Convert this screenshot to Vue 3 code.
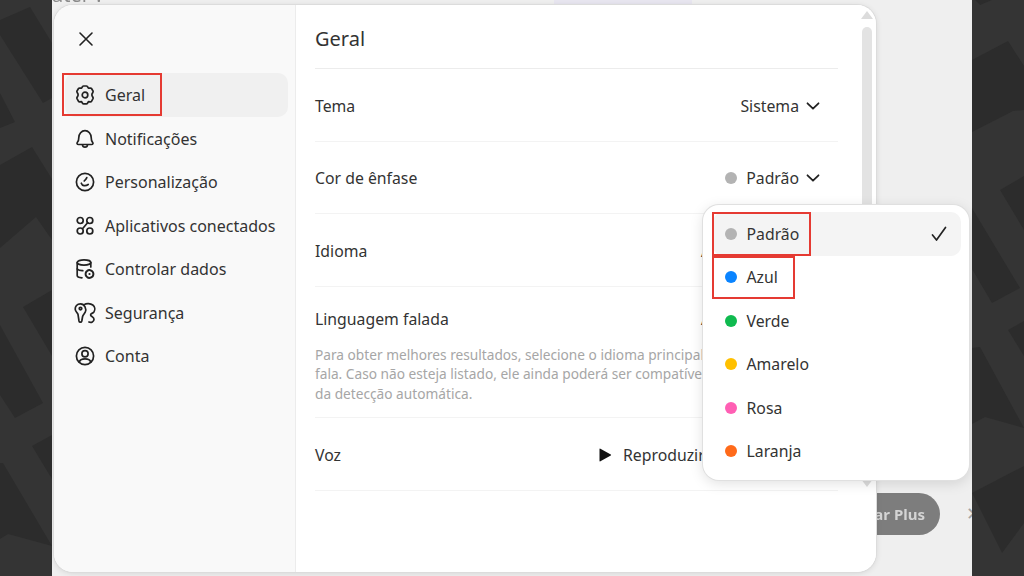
<script setup>
const nav = [
  { label: 'Geral', icon: 'gear', active: true },
  { label: 'Notificações', icon: 'bell' },
  { label: 'Personalização', icon: 'clock' },
  { label: 'Aplicativos conectados', icon: 'apps' },
  { label: 'Controlar dados', icon: 'data' },
  { label: 'Segurança', icon: 'key' },
  { label: 'Conta', icon: 'user' },
]
const colors = [
  { label: 'Padrão', color: '#b3b3b3', selected: true },
  { label: 'Azul', color: '#0a84ff' },
  { label: 'Verde', color: '#0fba4f' },
  { label: 'Amarelo', color: '#ffc000' },
  { label: 'Rosa', color: '#ff5fb4' },
  { label: 'Laranja', color: '#ff6a1a' },
]
</script>

<template>
  <div class="page">
    <svg class="strip" width="52" height="576" viewBox="0 0 52 576">
      <rect width="52" height="576" fill="#343434" />
      <g fill="#2c2c2c">
        <path d="M0 20 L30 7 L52 43 V98 L43 103 L0 35Z" />
        <path d="M0 93 L15 122 L0 128Z" />
        <path d="M0 165 L32 147 L52 179 V240 L36 217 L0 248Z" />
        <path d="M23 307 L52 290 V356Z" />
        <path d="M0 325 L43 403 L15 418 L0 395Z" />
        <path d="M32 446 L52 435 V479Z" />
        <path d="M0 463 H3 L52 546 L8 534 L0 539Z" />
      </g>
    </svg>

    <div class="center">
      <div class="behind-title">ater ?</div>
      <div class="behind-top"></div>
      <div class="upgrade">ar Plus</div>
      <div class="behind-x">✕</div>

      <section class="modal">
        <aside class="sidebar">
          <button class="close" aria-label="Fechar">
            <svg width="24" height="24" viewBox="0 0 24 24" fill="none" stroke="#222" stroke-width="1.6" stroke-linecap="round">
              <path d="M6 6 L18 18 M18 6 L6 18" />
            </svg>
          </button>
          <nav class="nav">
            <div v-for="n in nav" :key="n.label" class="nav-item" :class="{ active: n.active }">
              <svg class="nav-icon" width="22" height="22" viewBox="0 0 22 22" fill="none" stroke="#222" stroke-width="1.7" stroke-linecap="round" stroke-linejoin="round">
                <template v-if="n.icon === 'gear'">
                  <path d="M8.600 2.500 Q9 2 9.600 2 H12.400 Q13 2 13.400 2.500 L14.400 4.100 L16.500 4 Q17.200 4 17.500 4.500 L19 7 Q19.300 7.600 19 8.100 L18 10 Q17.800 10.800 18 11.600 L19 13.500 Q19.300 14.100 19 14.700 L17.500 17.300 Q17.200 17.800 16.500 17.800 L14.400 17.700 L13.400 19.400 Q13 19.900 12.400 19.900 H9.600 Q9 19.900 8.600 19.400 L7.600 17.700 L5.500 17.800 Q4.800 17.800 4.500 17.300 L3 14.700 Q2.700 14.100 3 13.500 L4 11.600 Q4.200 10.800 4 10 L3 8.100 Q2.700 7.600 3 7 L4.500 4.500 Q4.800 4 5.500 4 L7.600 4.100Z" />
                  <circle cx="11" cy="11" r="2.800" />
                </template>
                <template v-else-if="n.icon === 'bell'">
                  <path d="M4.500 16.500 C3 16.500 2.600 15.200 3.400 14.300 C4.600 13 4.800 11.500 4.800 9.500 C4.800 6 7.500 2.600 11 2.600 C14.500 2.600 17.200 6 17.200 9.500 C17.200 11.500 17.400 13 18.600 14.300 C19.400 15.200 19 16.500 17.500 16.500Z" />
                  <path d="M8.500 16.800 C8.700 20 13.300 20 13.500 16.800" />
                </template>
                <template v-else-if="n.icon === 'clock'">
                  <circle cx="11" cy="11" r="8.600" />
                  <path d="M12.800 6.600 C12.200 8 11.200 9 10.200 10" />
                  <path d="M7.300 12.200 C8.200 15 11.500 15.400 14.200 13.500" />
                </template>
                <template v-else-if="n.icon === 'apps'">
                  <circle cx="6.200" cy="5.500" r="3" />
                  <circle cx="15.800" cy="5.500" r="3" />
                  <circle cx="6.200" cy="16" r="3" />
                  <circle cx="15.800" cy="16" r="3" />
                  <path d="M8.500 13.800 L13.600 7.800" />
                </template>
                <template v-else-if="n.icon === 'data'">
                  <ellipse cx="10" cy="4.500" rx="6.800" ry="2.600" />
                  <path d="M3.200 4.500 V17.500 C3.200 18.800 5.500 19.700 8 19.800" />
                  <path d="M16.800 4.500 V9" />
                  <path d="M3.200 11 C4.500 12.300 6.500 12.800 8.800 12.700" />
                  <circle cx="15.500" cy="16" r="3.900" stroke-dasharray="2.200 .9" stroke-width="2" />
                  <circle cx="15.500" cy="16" r="1.100" fill="#222" stroke="none" />
                </template>
                <template v-else-if="n.icon === 'key'">
                  <path d="M6.500 1.800 C3 1.800 1 4.500 1.200 7.300 C1.400 9.500 3.200 10.600 4 12.300 L5 19 C5.300 20.600 7.400 20.600 7.800 19 L8.600 14.500 C8.900 12.900 10.500 11.500 11.200 10.200 C12.800 7 10.700 1.800 6.500 1.800Z" />
                  <circle cx="6.500" cy="6.600" r="1.300" />
                  <path d="M10.200 2.600 C12.500 1 16.500 1.300 18.800 3 C21.200 4.900 21.200 8 19.900 10 C18.600 11.800 16.600 11 16.600 12.900 C16.600 14.500 20 14.500 20 17.300 C20 19.800 17.200 21 15 20" />
                </template>
                <template v-else>
                  <circle cx="11" cy="11" r="8.600" />
                  <circle cx="11" cy="8.700" r="3.100" />
                  <path d="M5.300 17 C6 14.600 8.300 13.900 11 13.900 C13.700 13.900 16 14.600 16.700 17" />
                </template>
              </svg>
              <span>{{ n.label }}</span>
            </div>
          </nav>
          <div class="callout nav-callout"></div>
        </aside>

        <main class="main">
          <div class="content">
            <h1 class="title">Geral</h1>
            <div class="row">
              <span>Tema</span>
              <span class="value">Sistema
                <svg class="chev" width="16" height="16" viewBox="0 0 16 16" fill="none" stroke="#222" stroke-width="1.800" stroke-linecap="round" stroke-linejoin="round"><path d="M2.500 5.300 L8 10.700 L13.500 5.300" /></svg>
              </span>
            </div>
            <div class="row">
              <span>Cor de ênfase</span>
              <span class="value"><i class="dot grey"></i>Padrão
                <svg class="chev" width="16" height="16" viewBox="0 0 16 16" fill="none" stroke="#222" stroke-width="1.800" stroke-linecap="round" stroke-linejoin="round"><path d="M2.500 5.300 L8 10.700 L13.500 5.300" /></svg>
              </span>
            </div>
            <div class="row">
              <span>Idioma</span>
              <span class="hidden-value">Automático</span>
            </div>
            <div class="row tall">
              <span class="tall-label">Linguagem falada</span>
              <span class="hidden-value tall-value">Automático</span>
              <p class="hint">Para obter melhores resultados, selecione o idioma principal<br />fala. Caso não esteja listado, ele ainda poderá ser compatível<br />da detecção automática.</p>
            </div>
            <div class="row voice">
              <span>Voz</span>
              <span class="play">
                <svg width="14" height="14" viewBox="0 0 14 14"><path d="M1.500 1.200 Q1.500 .2 2.400 .7 L12.800 6.400 Q13.500 7 12.800 7.600 L2.400 13.300 Q1.500 13.800 1.500 12.800Z" fill="#111" /></svg>
                Reproduzir
              </span>
            </div>
          </div>
          <div class="scroll">
            <i class="arrow up"></i>
            <i class="thumb"></i>
            <i class="arrow down"></i>
          </div>
        </main>

        <div class="menu">
          <div v-for="c in colors" :key="c.label" class="menu-item" :class="{ sel: c.selected }">
            <i class="dot" :style="{ background: c.color }"></i>
            <span>{{ c.label }}</span>
            <svg v-if="c.selected" class="check" width="18" height="18" viewBox="0 0 18 18" fill="none" stroke="#222" stroke-width="1.700" stroke-linecap="round" stroke-linejoin="round"><path d="M2.500 10 L6.500 15 L15.500 2.500" /></svg>
          </div>
          <div class="callout c-pad"></div>
          <div class="callout c-azul"></div>
        </div>
      </section>
    </div>

    <svg class="strip" width="52" height="576" viewBox="0 0 52 576">
      <rect width="52" height="576" fill="#343434" />
      <g fill="#2c2c2c">
        <path d="M3 0 H20 L8 5Z" />
        <path d="M0 60 L36 41 L52 66 V110 L41 111 L0 132Z" />
        <path d="M28 190 L52 176 V230Z" />
        <path d="M0 208 L48 288 L20 303 L0 269Z" />
        <path d="M36 330 L52 321 V356Z" />
        <path d="M0 348 L8 347 L52 428 L13 417 L0 424Z" />
        <path d="M0 493 L52 466 V523 L30 553Z" />
      </g>
    </svg>
  </div>
</template>

<style>
html, body { margin: 0; padding: 0; overflow: hidden; }
</style>

<style scoped>
.page {
  width: 1024px;
  height: 576px;
  display: flex;
  overflow: hidden;
  font-family: "Noto Sans", "Open Sans", sans-serif;
  font-size: 15.800px;
  color: #2a2a2a;
}
.strip { flex: none; display: block; position: relative; z-index: 2; }
.center {
  flex: 1;
  position: relative;
  background: #efefef;
  padding: 5px 0 0 2px;
}
.behind-title {
  position: absolute;
  left: 0;
  top: -14px;
  color: #8c8c8c;
  font-size: 20px;
  line-height: 18px;
  filter: blur(.5px);
}
.behind-top {
  position: absolute;
  left: 502px;
  top: 0;
  width: 138px;
  height: 5px;
  background: #e8e6f0;
}
.upgrade {
  position: absolute;
  left: 760px;
  top: 493px;
  width: 128px;
  height: 42px;
  box-sizing: border-box;
  padding-right: 15px;
  border-radius: 21px;
  background: #7d7d7d;
  color: #d4d4d4;
  font-weight: 700;
  font-size: 15px;
  line-height: 42px;
  text-align: right;
  filter: blur(.6px);
}
.behind-x {
  position: absolute;
  left: 914px;
  top: 501px;
  color: #a5a5a5;
  font-size: 18px;
  line-height: 24px;
}
.modal {
  position: relative;
  width: 822px;
  height: 567px;
  box-sizing: border-box;
  display: flex;
  background: #fff;
  border-radius: 19px;
  box-shadow: 0 0 0 1px #dcdcdc, 0 1px 6px rgba(0,0,0,.12);
}
.sidebar {
  position: relative;
  flex: none;
  width: 242px;
  box-sizing: border-box;
  background: #f9f9f9;
  border-right: 1px solid #ececec;
  border-radius: 19px 0 0 19px;
  padding: 20px 7px 0 11px;
}
.close {
  display: block;
  width: 24px;
  height: 24px;
  padding: 0;
  margin: 2px 0 22.400px 9px;
  border: 0;
  background: none;
}
.nav { display: flex; flex-direction: column; gap: 0; }
.nav-item {
  height: 43.500px;
  display: flex;
  align-items: center;
  gap: 9px;
  padding-left: 9px;
  border-radius: 10px;
  font-size: 16px;
  color: #333;
}
.nav-item.active { background: #f0f0f0; }
.nav-icon { flex: none; }
.callout {
  position: absolute;
  box-sizing: border-box;
  border: 2px solid #e53a32;
  pointer-events: none;
}
.nav-callout { left: 8px; top: 68px; width: 100px; height: 43px; }
.main { position: relative; flex: 1; background: #fff; border-radius: 0 19px 19px 0; }
.content { width: 523px; margin-left: 19px; }
.title {
  margin: 0;
  height: 64px;
  box-sizing: border-box;
  padding-top: 18px;
  font-size: 20px;
  line-height: 32px;
  font-weight: 400;
  color: #333;
  border-bottom: 1px solid #ececec;
}
.row {
  height: 72.500px;
  box-sizing: border-box;
  display: flex;
  align-items: center;
  justify-content: space-between;
  border-bottom: 1px solid #f3f3f3;
  padding: 2px 17px 0 0;
  color: #333;
}
.value { display: flex; align-items: center; }
.chev { margin-left: 6px; }
.dot {
  display: block;
  width: 12px;
  height: 12px;
  border-radius: 50%;
  flex: none;
}
.grey { background: #b3b3b3; margin-right: 9px; }
.hidden-value { width: 120px; }
.tall { display: block; height: 131px; padding: 20px 0 0; position: relative; }
.tall-label { display: block; line-height: 24px; }
.tall-value { position: absolute; left: 386px; top: 20px; line-height: 24px; }
.hint {
  margin: 14px 0 0;
  white-space: nowrap;
  font-size: 13.700px;
  line-height: 19.500px;
  color: #a6a6a6;
}
.voice { height: 73px; padding: 2px 0 0; justify-content: flex-start; }
.voice > span:first-child { width: 283px; }
.play { display: flex; align-items: center; gap: 11px; }
.scroll {
  position: absolute;
  right: 4px;
  top: 6px;
  bottom: 85px;
  width: 10px;
  display: flex;
  flex-direction: column;
  align-items: center;
}
.thumb { flex: 1; width: 10px; background: #e3e3e3; border-radius: 5px; margin: 8px 0 4px; }
.arrow { width: 0; height: 0; border-left: 6px solid transparent; border-right: 6px solid transparent; }
.up { border-bottom: 8px solid #dcdcdc; }
.down { border-top: 8px solid #dcdcdc; }
.menu {
  position: absolute;
  left: 649px;
  top: 200px;
  width: 266px;
  height: 275px;
  box-sizing: border-box;
  padding: 7px 8px 0 10px;
  background: #fff;
  border-radius: 16px;
  box-shadow: 0 0 0 1px #e0e0e0, 0 3px 14px rgba(0,0,0,.13);
}
.menu-item {
  position: relative;
  height: 43.500px;
  display: flex;
  align-items: center;
  gap: 9.500px;
  padding-left: 12px;
  border-radius: 10px;
  color: #333;
}
.menu-item.sel { background: #f4f4f4; }
.check { position: absolute; right: 13px; top: 13px; }
.c-pad { left: 9px; top: 7px; width: 99px; height: 44px; }
.c-azul { left: 9px; top: 51px; width: 83px; height: 43px; }
</style>
